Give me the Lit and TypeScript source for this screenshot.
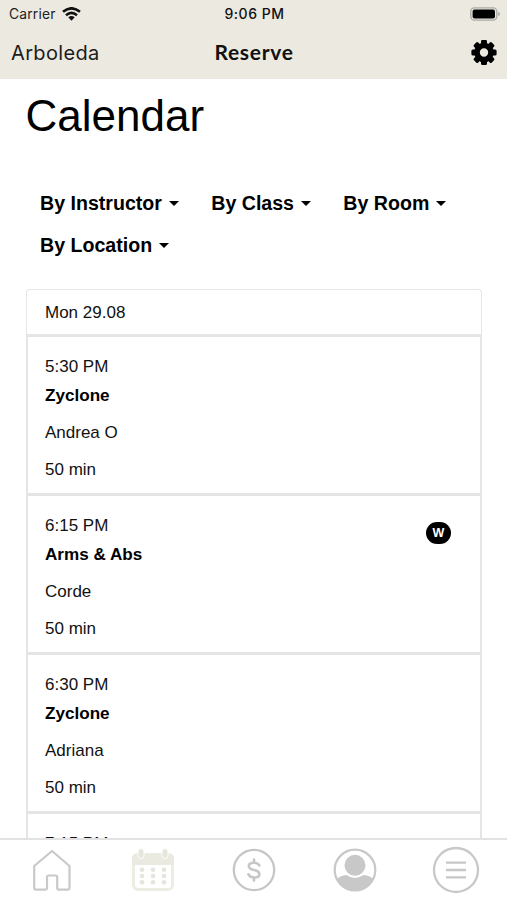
import { LitElement, html, css, svg, nothing } from "lit";
import { customElement } from "lit/decorators.js";

interface Session {
  time: string;
  title?: string;
  instructor?: string;
  waitlist?: boolean;
}

const filters = ["By Instructor", "By Class", "By Room", "By Location"];

const sessions: Session[] = [
  { time: "5:30 PM", title: "Zyclone", instructor: "Andrea O" },
  { time: "6:15 PM", title: "Arms & Abs", instructor: "Corde", waitlist: true },
  { time: "6:30 PM", title: "Zyclone", instructor: "Adriana" },
  { time: "7:15 PM" },
];

const teeth = [0, 45, 90, 135, 180, 225, 270, 315];
const dots = [0, 1, 2].flatMap((r) => [0, 1, 2].map((c) => [c, r]));

@customElement("app-root")
export class AppRoot extends LitElement {
  static styles = css`
    :host {
      display: flex;
      flex-direction: column;
      height: 900px;
      overflow: hidden;
      background: #fff;
      color: #000;
      font-family: "Liberation Sans", Arial, sans-serif;
    }
    svg { display: block; }
    .top { flex: none; height: 79px; background: #ece9e1; }
    .status, .bar {
      display: grid;
      grid-template-columns: 1fr auto 1fr;
      align-items: center;
      font-family: Inter, sans-serif;
      white-space: nowrap;
    }
    .status { height: 27px; padding: 0 7px 0 9px; font-size: 13.8px; color: #222; }
    .carrier { display: flex; align-items: center; gap: 6px; letter-spacing: 0.2px; }
    .clock { font-weight: 500; font-size: 14px; letter-spacing: 0.5px; color: #111; }
    .end { justify-self: end; }
    .bar { height: 51px; padding: 0 10px 0 11px; }
    .place { font-size: 20px; color: #1c1c1c; letter-spacing: 0.35px; }
    .screen { font-family: Lato, sans-serif; font-weight: 700; font-size: 21px; letter-spacing: 0.7px; line-height: 24px; padding-bottom: 1px; color: #111; }
    main { flex: 1; min-height: 0; overflow: hidden; padding: 12px 25px 0 26px; }
    h1 { margin: 0 0 0 -0.5px; font-size: 44px; line-height: 50px; font-weight: 400; }
    .filters { display: flex; flex-wrap: wrap; margin: 42px 0 0 14px; }
    .filter {
      display: flex;
      align-items: center;
      height: 41.5px;
      margin-right: 32.3px;
      font-size: 19.6px;
      font-weight: 700;
      white-space: nowrap;
    }
    .caret {
      margin: 0 0 0 7px;
      border: 5px solid transparent;
      border-top-color: #000;
      border-bottom: 0;
    }
    .list { margin-top: 23px; font-size: 17px; color: #111; }
    .day {
      box-sizing: border-box;
      height: 45px;
      border: 1px solid #e6e6e6;
      border-bottom: 0;
      border-radius: 4px 4px 0 0;
      padding: 0 18px;
      line-height: 46px;
    }
    .row {
      box-sizing: border-box;
      position: relative;
      height: 159px;
      border: 2px solid #e5e5e5;
      border-top-width: 3px;
      border-bottom: 0;
      padding: 16px 17px 0;
      line-height: 28px;
    }
    .row b { display: block; color: #000; font-size: 17.1px; line-height: 30px; }
    .row p { margin: 7px 0 0; line-height: 30px; }
    .badge {
      position: absolute;
      top: 26px;
      right: 29px;
      width: 25px;
      height: 22px;
      border-radius: 11px;
      background: #000;
      color: #fff;
      font-size: 12.5px;
      font-weight: 700;
      line-height: 23px;
      text-align: center;
    }
    nav {
      flex: none;
      box-sizing: border-box;
      height: 62px;
      border-top: 2px solid #e2e2e2;
      padding-left: 1px;
      display: grid;
      grid-template-columns: repeat(5, 1fr);
      justify-items: center;
      align-items: center;
    }
  `;

  private navIcons() {
    return html`
      <svg width="48" height="48" viewBox="0 0 48 48" fill="none" stroke="#c9c9c9" stroke-width="2.2" stroke-linejoin="round">
        <path d="M24 5 41.5 20V42Q41.5 43.7 39.5 43.7H31Q29.2 43.7 29.2 42V31Q29.2 29.5 27.7 29.5H20.5Q19 29.5 19 31V42Q19 43.7 17 43.7H8Q6.2 43.7 6.2 42V20Z"/>
      </svg>
      <svg width="48" height="48" viewBox="0 0 48 48">
        <rect x="4.5" y="8.5" width="39" height="35" rx="4.5" fill="none" stroke="#eeede3" stroke-width="3"/>
        <path d="M3 19V12Q3 7.5 8 7.5H40Q45 7.5 45 12V19Z" fill="#ebeae0"/>
        <g fill="#e6e5dc" stroke="#fff"><rect x="9" y="2.5" width="6" height="10" rx="3"/><rect x="33" y="2.5" width="6" height="10" rx="3"/></g>
        ${dots.map(([c, r]) => svg`<circle cx=${13 + c * 11} cy=${23.7 + r * 6.3} r="2.3" fill="#e6e5dc"/>`)}
      </svg>
      <svg width="48" height="48" viewBox="0 0 48 48" fill="none" stroke="#c6c6c6" stroke-width="2.3">
        <circle cx="24" cy="24" r="20.2"/>
        <path stroke-width="2.6" stroke-linecap="round" d="M24 13.5V16.5M24 31.5V34.5M29.3 19.5Q28 16.7 24 16.7Q18.8 16.7 18.8 20Q18.8 23 24 24Q29.4 25 29.4 28.2Q29.4 31.5 24 31.5Q19.8 31.5 18.4 28.3"/>
      </svg>
      <svg width="48" height="48" viewBox="0 0 48 48" fill="#c8c8c8">
        <circle cx="24" cy="24" r="20.3" fill="none" stroke="#c8c8c8" stroke-width="2.2"/>
        <circle cx="24" cy="19.3" r="10.5"/>
        <path d="M6 33Q9 29.5 15.5 29Q24 35 32.5 29Q39 29.5 42 33Q36 45 24 45T6 33Z"/>
      </svg>
      <svg width="48" height="48" viewBox="0 0 48 48" fill="none" stroke="#c8c8c8" stroke-width="2.3">
        <circle cx="24" cy="24" r="22"/>
        <path d="M14 16.7H34M14 24H34M14 31.3H34"/>
      </svg>`;
  }

  render() {
    return html`
      <header class="top">
        <div class="status">
          <span class="carrier">Carrier
            <svg width="19" height="14" viewBox="0 0 19 14" fill="none" stroke="#111" stroke-width="2.6">
              <path d="M1 4.8Q9.5-2.2 18 4.8M4 8.2Q9.5 3.6 15 8.2"/>
              <path d="M6.3 10.3Q9.5 7.8 12.7 10.3L9.5 13.7Z" fill="#111" stroke="none"/>
            </svg>
          </span>
          <span class="clock">9:06 PM</span>
          <svg class="end" width="30" height="14" viewBox="0 0 30 14">
            <rect x=".8" y=".8" width="26" height="12.4" rx="3.6" fill="none" stroke="#aaa9a3" stroke-width="1.3"/>
            <rect x="2.6" y="2.6" width="22.4" height="8.8" rx="2"/>
            <path d="M28.2 4.7Q30 5.4 30 7T28.2 9.3Z" fill="#aaa9a3"/>
          </svg>
        </div>
        <div class="bar">
          <span class="place">Arboleda</span>
          <span class="screen">Reserve</span>
          <svg class="end" width="26" height="26" viewBox="0 0 26 26">
            <circle cx="13" cy="12.5" r="7" fill="none" stroke="#000" stroke-width="5.6"/>
            ${teeth.map((a) => svg`<rect x="10" y="-.1" width="6" height="5" rx="1.5" transform="rotate(${a} 13 12.5)"/>`)}
          </svg>
        </div>
      </header>
      <main>
        <h1>Calendar</h1>
        <div class="filters">
          ${filters.map((f) => html`<div class="filter">${f}<span class="caret"></span></div>`)}
        </div>
        <section class="list">
          <div class="day">Mon 29.08</div>
          ${sessions.map((s) => html`
            <article class="row">
              ${s.time}
              ${s.title ? html`<b>${s.title}</b><p>${s.instructor}</p><p>50 min</p>` : nothing}
              ${s.waitlist ? html`<span class="badge">W</span>` : nothing}
            </article>`)}
        </section>
      </main>
      <nav>${this.navIcons()}</nav>`;
  }
}
